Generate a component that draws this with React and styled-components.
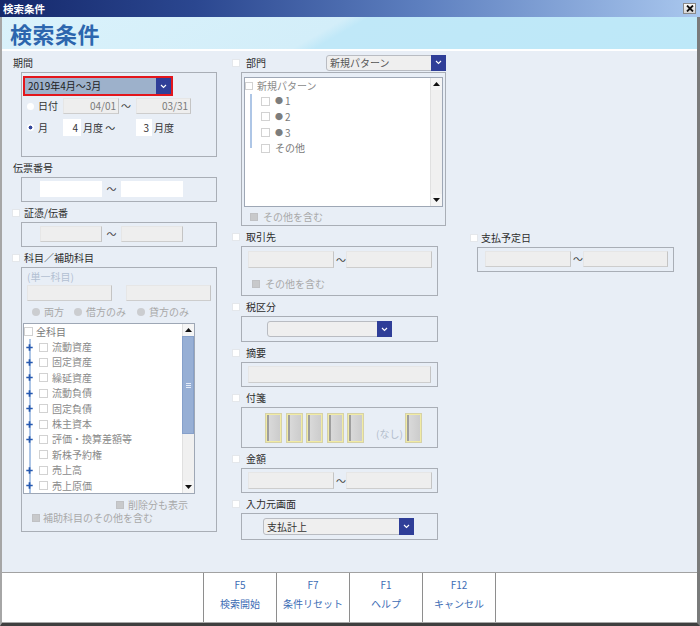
import React from "react";
import styled, { createGlobalStyle } from "styled-components";

const GlobalStyle = createGlobalStyle`
  * { box-sizing: border-box; }
  html, body { margin: 0; padding: 0; background: #ffffff; }
  body {
    font-family: "Noto Sans CJK JP", "Noto Sans", sans-serif;
    font-size: 10px;
    color: #333;
  }
`;

const Window = styled.div`
  width: 700px;
  height: 626px;
  display: flex;
  flex-direction: column;
  overflow: hidden;
`;

const TitleBar = styled.div`
  height: 17px;
  flex: none;
  display: flex;
  align-items: center;
  justify-content: space-between;
  padding: 0 4px 0 3px;
  background: linear-gradient(90deg, #15286b 0%, #2b4790 28%, #5d7fbf 60%, #a9c7ee 100%);
  color: #fff;
  font-size: 10.5px;
  font-weight: 700;
  line-height: 17px;
`;

const CloseButton = styled.div`
  width: 13px;
  height: 11px;
  background: linear-gradient(#fafafa, #d6d6d6);
  border: 1px solid #8a8a8a;
  display: flex;
  align-items: center;
  justify-content: center;
`;

const Frame = styled.div`
  flex: 1;
  min-height: 0;
  display: flex;
  flex-direction: column;
  border-left: 2px solid #a6a6a6;
  border-right: 3px solid #7a7a7a;
  border-bottom: 3px solid #3f3f3f;
`;

const Banner = styled.div`
  height: 34px;
  flex: none;
  border-bottom: 2px solid #fff;
  padding-left: 8px;
  display: flex;
  align-items: center;
  background: linear-gradient(150deg, #daf2fb 0%, #d3eef9 46%, #c0e8f8 49%, #bde8f8 100%);
  color: #2c66ae;
  font-size: 22px;
  font-weight: 700;
  letter-spacing: 0.5px;
`;

const Body = styled.div`
  flex: 1;
  display: flex;
  align-items: flex-start;
  padding: 1px 0 0 10px;
  background: #e8eef6;
`;

const Column = styled.div`
  width: ${(p) => p.$w}px;
  margin-left: ${(p) => p.$ml || 0}px;
  margin-top: ${(p) => p.$mt || 0}px;
  flex: none;
  display: flex;
  flex-direction: column;
`;

const LabelRow = styled.div`
  height: 20px;
  flex: none;
  display: flex;
  align-items: center;
  justify-content: space-between;
  padding-top: 1px;
`;

const LabelLeft = styled.div`
  display: flex;
  align-items: center;
  padding-left: ${(p) => p.$pl || 0}px;
`;

const Check = styled.span`
  width: ${(p) => p.$size || 8}px;
  height: ${(p) => p.$size || 8}px;
  flex: none;
  margin-left: ${(p) => p.$ml || 0}px;
  margin-right: ${(p) => p.$mr ?? 5}px;
  background: ${(p) => (p.$disabled ? "#c8c9cb" : "#fff")};
  border: 1px solid ${(p) => (p.$disabled ? "#c0c1c4" : p.$line ? "#d2d2d2" : "#e4e7eb")};
`;

const Label = styled.span`
  color: #2c2c2c;
  font-size: 10px;
  line-height: 12px;
  white-space: nowrap;
`;

const Group = styled.div`
  margin-left: ${(p) => p.$ml}px;
  width: ${(p) => p.$w}px;
  height: ${(p) => p.$h}px;
  flex: none;
  border: 1px solid #a9aeb6;
  padding: ${(p) => p.$pad};
  display: flex;
  flex-direction: column;
`;

const Row = styled.div`
  display: flex;
  align-items: ${(p) => p.$align || "center"};
  height: ${(p) => p.$h}px;
  margin-top: ${(p) => p.$mt || 0}px;
  padding-left: ${(p) => p.$pl || 0}px;
  flex: none;
`;

const Text = styled.span`
  color: ${(p) => p.$c || "#333"};
  width: ${(p) => (p.$w ? p.$w + "px" : "auto")};
  margin-left: ${(p) => p.$ml || 0}px;
  padding-bottom: ${(p) => p.$pb || 0}px;
  flex: none;
  white-space: nowrap;
  line-height: 12px;
`;

const Field = styled.div`
  width: ${(p) => p.$w}px;
  height: ${(p) => p.$h || 16}px;
  margin-left: ${(p) => p.$ml || 0}px;
  flex: none;
  background: ${(p) => (p.$white ? "#fff" : "#eeeeee")};
  border: 1px solid;
  border-color: ${(p) => (p.$white ? "#fff" : "#e6e6e6 #c4c4c4 #cdcdcd #e6e6e6")};
  display: flex;
  align-items: center;
  justify-content: flex-end;
  padding-right: 2px;
  color: ${(p) => (p.$muted ? "#7a7a7a" : "#333")};
  line-height: 12px;
`;

const Tilde = styled.span`
  width: ${(p) => p.$w}px;
  flex: none;
  text-align: ${(p) => p.$align || "center"};
  padding-left: ${(p) => p.$pl || 0}px;
  color: #444;
  line-height: 12px;
`;

const Radio = styled.span`
  width: ${(p) => (p.$disabled ? 8 : 7)}px;
  height: ${(p) => (p.$disabled ? 8 : 7)}px;
  border-radius: 50%;
  flex: none;
  margin-right: 4px;
  background: ${(p) =>
    p.$disabled
      ? "#cbcdd0"
      : p.$on
      ? "radial-gradient(circle, #33469b 0 1.7px, #fff 2.2px)"
      : "#fff"};
`;

const RadioItem = styled.div`
  display: flex;
  align-items: center;
  width: ${(p) => (p.$w ? p.$w + "px" : "auto")};
  flex: none;
`;

const PeriodSelect = styled.div`
  display: flex;
  width: 150px;
  height: 20px;
  flex: none;
  border: 2px solid #e3161c;
  background: #9db1cb;
`;

const SelectBox = styled.div`
  display: flex;
  width: ${(p) => p.$w}px;
  height: ${(p) => p.$h || 16}px;
  flex: none;
  background: #efefef;
  border: 1px solid #b9bcc2;
  border-radius: 3px 0 0 3px;
`;

const SelectText = styled.div`
  flex: 1;
  display: flex;
  align-items: center;
  padding-left: 3px;
  color: ${(p) => p.$c || "#555"};
  white-space: nowrap;
  overflow: hidden;
  line-height: 12px;
`;

const SelectButton = styled.div`
  width: 15px;
  flex: none;
  background: #2f3e98;
  display: flex;
  align-items: center;
  justify-content: center;
  margin: ${(p) => (p.$flush ? "0" : "-1px -1px -1px 0")};
`;

const ListBox = styled.div`
  width: ${(p) => p.$w}px;
  height: ${(p) => p.$h}px;
  margin-top: ${(p) => p.$mt || 0}px;
  flex: none;
  background: #fff;
  border: 1px solid #9ea7b5;
  display: flex;
`;

const ListItems = styled.div`
  flex: 1;
  overflow: hidden;
`;

const TreeRow = styled.div`
  height: ${(p) => p.$rh}px;
  display: flex;
  align-items: center;
  padding-left: ${(p) => p.$pl || 0}px;
  color: ${(p) => p.$c || "#8a8a8a"};
  white-space: nowrap;
  line-height: 12px;
`;

const Guide = styled.div`
  width: ${(p) => p.$w}px;
  align-self: stretch;
  flex: none;
  margin-right: ${(p) => p.$mr}px;
  display: flex;
  align-items: center;
  justify-content: center;
  background: ${(p) =>
    `linear-gradient(90deg, transparent ${p.$x}px, #aec6e6 ${p.$x}px, #aec6e6 ${
      p.$x + 2
    }px, transparent ${p.$x + 2}px) ${p.$half ? "top / 100% 50%" : "0 0 / 100% 100%"} no-repeat`};
`;

const Bullet = styled.span`
  color: #7d7d7d;
  font-size: 8px;
  margin-right: 2px;
`;

const ScrollBar = styled.div`
  width: 12px;
  flex: none;
  display: flex;
  flex-direction: column;
  background: #f0f0f0;
  border-left: 1px solid #e0e0e0;
`;

const ScrollArrow = styled.div`
  height: 12px;
  flex: none;
  display: flex;
  align-items: center;
  justify-content: center;
  background: #f5f5f5;
`;

const Thumb = styled.div`
  height: ${(p) => p.$h}px;
  flex: none;
  margin: 0 0 0 -1px;
  background: #97afd5;
  border: 1px solid #86a0ca;
  display: flex;
  align-items: center;
  justify-content: center;
`;

const Track = styled.div`
  flex: 1;
`;

const Tag = styled.div`
  width: 17px;
  height: 30px;
  flex: none;
  margin-right: ${(p) => p.$mr ?? 3.5}px;
  margin-left: ${(p) => p.$ml || 0}px;
  border: 2px solid #f1eba4;
  outline: 1px solid #d6d2a8;
  outline-offset: -1px;
  background: linear-gradient(90deg, #9e9e9e 0 2px, #d9d9d9 2px, #cccccc 100%);
`;

const Footer = styled.div`
  height: 51px;
  flex: none;
  display: flex;
  background: #fff;
  border-top: 1px solid #a2a2a2;
  border-bottom: 1px solid #a8a8a8;
  padding-left: 201px;
`;

const FKey = styled.div`
  width: ${(p) => p.$w || 73}px;
  flex: none;
  border-left: 1px solid #8e8e8e;
  display: flex;
  flex-direction: column;
  align-items: center;
  padding-top: 2px;
  color: #3d6db5;
  font-size: 10px;
  line-height: 19px;
  &:last-child {
    border-right: 1px solid #8e8e8e;
  }
`;

const Chevron = () => (
  <svg width="7" height="5" viewBox="0 0 7 5">
    <polyline points="1,1 3.5,3.5 6,1" fill="none" stroke="#fff" strokeWidth="1.1" />
  </svg>
);

const Arrow = ({ down }) => (
  <svg width="7" height="4" viewBox="0 0 7 4">
    <polygon points={down ? "0,0 7,0 3.5,4" : "0,4 7,4 3.5,0"} fill="#111" />
  </svg>
);

const Plus = () => (
  <svg width="7" height="7" viewBox="0 0 7 7">
    <path d="M3.5 0.3v6.4M0.3 3.5h6.4" stroke="#2659b0" strokeWidth="1.7" />
  </svg>
);

const Grip = () => (
  <svg width="5" height="5" viewBox="0 0 5 5">
    <path d="M0 0.5h5M0 2.5h5M0 4.5h5" stroke="#e4ecf8" strokeWidth="1" />
  </svg>
);

const Select = ({ w, h, text, color }) => (
  <SelectBox $w={w} $h={h}>
    <SelectText $c={color}>{text}</SelectText>
    <SelectButton>
      <Chevron />
    </SelectButton>
  </SelectBox>
);

const accounts = [
  ["流動資産", true],
  ["固定資産", true],
  ["繰延資産", true],
  ["流動負債", true],
  ["固定負債", true],
  ["株主資本", true],
  ["評価・換算差額等", true],
  ["新株予約権", false],
  ["売上高", true],
  ["売上原価", true],
];

const depts = [
  ["1", true],
  ["2", true],
  ["3", true],
  ["その他", false],
];

const fkeys = [
  ["F5", "検索開始"],
  ["F7", "条件リセット"],
  ["F1", "ヘルプ"],
  ["F12", "キャンセル"],
];

const RangeFields = ({ white, w1, w2, tw, h, align, pl }) => (
  <>
    <Field $w={w1} $h={h} $white={white} />
    <Tilde $w={tw} $align={align} $pl={pl}>～</Tilde>
    <Field $w={w2} $h={h} $white={white} />
  </>
);

const App = () => {
  return (
    <Window>
      <GlobalStyle />
      <TitleBar>
        <span>検索条件</span>
        <CloseButton>
          <svg width="8" height="7" viewBox="0 0 8 7">
            <path d="M1 0.5l6 6M7 0.5l-6 6" stroke="#111" strokeWidth="1.8" />
          </svg>
        </CloseButton>
      </TitleBar>
      <Frame>
        <Banner>検索条件</Banner>
        <Body>
          <Column $w={205}>
            <LabelRow>
              <LabelLeft $pl={1}>
                <Label>期間</Label>
              </LabelLeft>
            </LabelRow>
            <Group $ml={9} $w={196} $h={85} $pad="3px 0 0 1px">
              <PeriodSelect>
                <SelectText $c="#1c1c1c">2019年4月～3月</SelectText>
                <SelectButton $flush>
                  <Chevron />
                </SelectButton>
              </PeriodSelect>
              <Row $h={16} $mt={2} $pl={4}>
                <Radio />
                <Text $w={25}>日付</Text>
                <Field $w={56} $muted>04/01</Field>
                <Tilde $w={17} $align="left" $pl={2}>～</Tilde>
                <Field $w={55} $muted>03/31</Field>
              </Row>
              <Row $h={17} $mt={5} $pl={4}>
                <Radio $on />
                <Text $w={25}>月</Text>
                <Field $w={18} $h={17} $white>4</Field>
                <Text $w={53} $ml={2}>月度 ～</Text>
                <Field $w={16} $h={17} $white>3</Field>
                <Text $ml={2}>月度</Text>
              </Row>
            </Group>

            <LabelRow>
              <LabelLeft $pl={1}>
                <Label>伝票番号</Label>
              </LabelLeft>
            </LabelRow>
            <Group $ml={9} $w={196} $h={25} $pad="3px 0 0 18px">
              <Row $h={16}>
                <RangeFields white w1={62} w2={62} tw={19} />
              </Row>
            </Group>

            <LabelRow>
              <LabelLeft>
                <Check $mr={4} />
                <Label>証憑/伝番</Label>
              </LabelLeft>
            </LabelRow>
            <Group $ml={9} $w={196} $h={25} $pad="3px 0 0 18px">
              <Row $h={16}>
                <RangeFields w1={62} w2={62} tw={19} />
              </Row>
            </Group>

            <LabelRow>
              <LabelLeft>
                <Check $mr={4} />
                <Label>科目／補助科目</Label>
              </LabelLeft>
            </LabelRow>
            <Group $ml={9} $w={196} $h={265} $pad="1px 0 0 1px">
              <Row $h={15} $pl={4}>
                <Text $c="#b2bfd2">(単一科目)</Text>
              </Row>
              <Row $h={16} $mt={1} $pl={4}>
                <Field $w={85} />
                <Field $w={85} $ml={14} />
              </Row>
              <Row $h={14} $mt={4} $pl={9}>
                <RadioItem $w={42}>
                  <Radio $disabled />
                  <Text $c="#a9a9a9">両方</Text>
                </RadioItem>
                <RadioItem $w={63}>
                  <Radio $disabled />
                  <Text $c="#a9a9a9">借方のみ</Text>
                </RadioItem>
                <RadioItem>
                  <Radio $disabled />
                  <Text $c="#a9a9a9">貸方のみ</Text>
                </RadioItem>
              </Row>
              <ListBox $w={172} $h={171} $mt={4}>
                <ListItems>
                  <TreeRow $rh={15.4} $pl={0} $c="#7a7a7a">
                    <Check $size={9} $line $mr={3} />
                    全科目
                  </TreeRow>
                  {accounts.map(([name, hasPlus]) => (
                    <TreeRow key={name} $rh={15.4} $pl={2}>
                      <Guide $w={7} $mr={6} $x={3}>
                        {hasPlus && <Plus />}
                      </Guide>
                      <Check $size={9} $line $mr={4} />
                      {name}
                    </TreeRow>
                  ))}
                </ListItems>
                <ScrollBar>
                  <ScrollArrow>
                    <Arrow />
                  </ScrollArrow>
                  <Thumb $h={98}>
                    <Grip />
                  </Thumb>
                  <Track />
                  <ScrollArrow>
                    <Arrow down />
                  </ScrollArrow>
                </ScrollBar>
              </ListBox>
              <Row $h={13} $mt={4} $pl={93}>
                <Check $disabled $mr={4} />
                <Text $c="#a9a9a9">削除分も表示</Text>
              </Row>
              <Row $h={13} $pl={9}>
                <Check $disabled $mr={3} />
                <Text $c="#a9a9a9">補助科目のその他を含む</Text>
              </Row>
            </Group>
          </Column>

          <Column $w={214} $ml={15}>
            <LabelRow>
              <LabelLeft>
                <Check $mr={6} />
                <Label>部門</Label>
              </LabelLeft>
              <Select w={120} text="新規パターン" />
            </LabelRow>
            <Group $ml={9} $w={205} $h={154} $pad="4px 2px 0 2px">
              <ListBox $w={199} $h={130}>
                <ListItems>
                  <TreeRow $rh={15.6} $c="#8a8a8a">
                    <Check $size={8} $line $mr={4} />
                    新規パターン
                  </TreeRow>
                  {depts.map(([name, bullet], i) => (
                    <TreeRow key={name} $rh={15.6} $pl={5} $c="#7a7a7a">
                      <Guide $w={2} $mr={9} $x={0} $half={i === depts.length - 1} />
                      <Check $size={9} $line $mr={5} />
                      {bullet && <Bullet>●</Bullet>}
                      {name}
                    </TreeRow>
                  ))}
                </ListItems>
                <ScrollBar>
                  <ScrollArrow>
                    <Arrow />
                  </ScrollArrow>
                  <Track />
                  <ScrollArrow>
                    <Arrow down />
                  </ScrollArrow>
                </ScrollBar>
              </ListBox>
              <Row $h={13} $mt={3} $pl={6}>
                <Check $disabled $mr={5} />
                <Text $c="#a9a9a9">その他を含む</Text>
              </Row>
            </Group>

            <LabelRow>
              <LabelLeft>
                <Check $mr={6} />
                <Label>取引先</Label>
              </LabelLeft>
            </LabelRow>
            <Group $ml={9} $w={197} $h={50} $pad="4px 0 0 6px">
              <Row $h={17}>
                <RangeFields w1={86} w2={86} tw={12} h={17} align="left" pl={2} />
              </Row>
              <Row $h={13} $mt={9} $pl={4}>
                <Check $disabled $mr={5} />
                <Text $c="#a9a9a9">その他を含む</Text>
              </Row>
            </Group>

            <LabelRow>
              <LabelLeft>
                <Check $mr={6} />
                <Label>税区分</Label>
              </LabelLeft>
            </LabelRow>
            <Group $ml={9} $w={197} $h={26} $pad="4px 0 0 25px">
              <Select w={125} text="" />
            </Group>

            <LabelRow>
              <LabelLeft>
                <Check $mr={6} />
                <Label>摘要</Label>
              </LabelLeft>
            </LabelRow>
            <Group $ml={9} $w={197} $h={25} $pad="3px 0 0 6px">
              <Field $w={183} $h={17} />
            </Group>

            <LabelRow>
              <LabelLeft>
                <Check $mr={6} />
                <Label>付箋</Label>
              </LabelLeft>
            </LabelRow>
            <Group $ml={9} $w={197} $h={41} $pad="5px 0 0 23px">
              <Row $h={30} $align="flex-end">
                <Tag />
                <Tag />
                <Tag />
                <Tag />
                <Tag $mr={0} />
                <Text $c="#b3bdcc" $ml={12} $pb={3}>(なし)</Text>
                <Tag $ml={2} $mr={0} />
              </Row>
            </Group>

            <LabelRow>
              <LabelLeft>
                <Check $mr={6} />
                <Label>金額</Label>
              </LabelLeft>
            </LabelRow>
            <Group $ml={9} $w={197} $h={25} $pad="3px 0 0 6px">
              <Row $h={17}>
                <RangeFields w1={86} w2={86} tw={12} h={17} align="left" pl={2} />
              </Row>
            </Group>

            <LabelRow>
              <LabelLeft>
                <Check $mr={6} />
                <Label>入力元画面</Label>
              </LabelLeft>
            </LabelRow>
            <Group $ml={9} $w={197} $h={27} $pad="4px 0 0 21px">
              <Select w={151} h={17} text="支払計上" color="#333" />
            </Group>
          </Column>

          <Column $w={204} $ml={24} $mt={175}>
            <LabelRow>
              <LabelLeft>
                <Check $mr={3} />
                <Label>支払予定日</Label>
              </LabelLeft>
            </LabelRow>
            <Group $ml={7} $w={197} $h={25} $pad="3px 0 0 7px">
              <Row $h={16}>
                <RangeFields w1={86} w2={85} tw={12} align="left" pl={2} />
              </Row>
            </Group>
          </Column>
        </Body>
        <Footer>
          {fkeys.map(([key, name], i) => (
            <FKey key={key} $w={i === fkeys.length - 1 ? 74 : 73}>
              <span>{key}</span>
              <span>{name}</span>
            </FKey>
          ))}
        </Footer>
      </Frame>
    </Window>
  );
};

export default App;
